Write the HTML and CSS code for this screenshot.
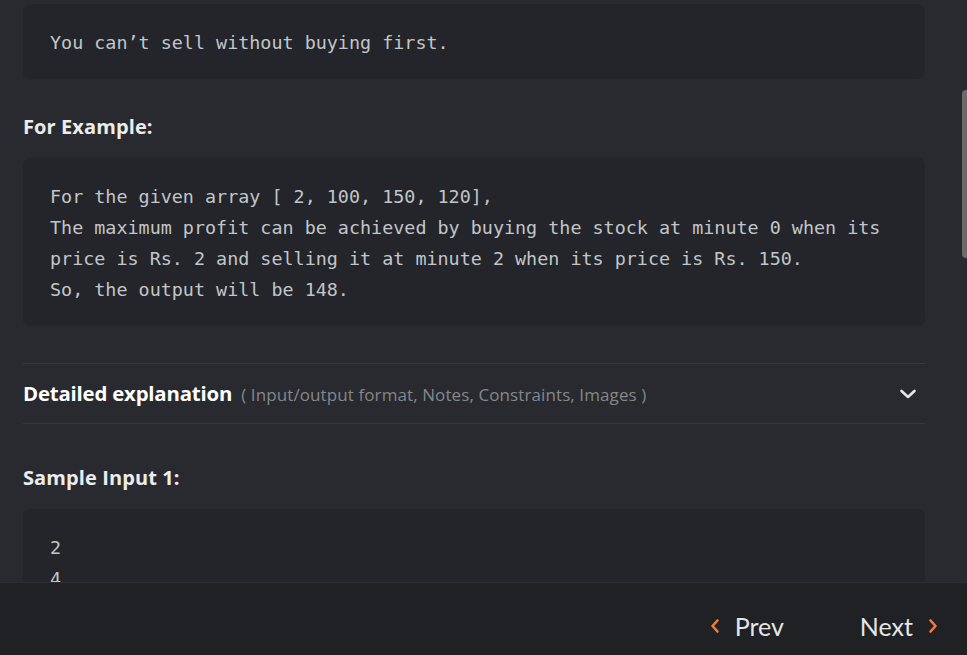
FILE: index.html
```html
<!DOCTYPE html>
<html>
<head>
<meta charset="utf-8">
<link rel="stylesheet" href="styles.css">
</head>
<body>
<div class="page">
  <main class="content">
    <pre class="code first">You can’t sell without buying first.</pre>
    <h3 class="heading">For Example:</h3>
    <pre class="code">For the given array [ 2, 100, 150, 120],
The maximum profit can be achieved by buying the stock at minute 0 when its
price is Rs. 2 and selling it at minute 2 when its price is Rs. 150.
So, the output will be 148.</pre>
    <div class="explain">
      <div class="explain-title">Detailed explanation <span class="explain-sub">( Input/output format, Notes, Constraints, Images )</span></div>
      <svg class="chev" width="18" height="12" viewBox="0 0 18 12"><path d="M2.5 3 L9 9 L15.5 3" fill="none" stroke="#e6e6e6" stroke-width="2.6" stroke-linecap="round" stroke-linejoin="round"/></svg>
    </div>
    <h3 class="heading sample">Sample Input 1:</h3>
    <pre class="code">2
4
7 1 5 3</pre>
    <div class="scroll-thumb"></div>
  </main>
  <footer class="footer">
    <a class="nav prev"><svg width="10" height="16" viewBox="0 0 10 16"><path d="M7.5 2.5 L2.5 8 L7.5 13.5" fill="none" stroke="#f47b36" stroke-width="2.6" stroke-linecap="round" stroke-linejoin="round"/></svg>Prev</a>
    <a class="nav next">Next<svg width="10" height="16" viewBox="0 0 10 16"><path d="M2.5 2.5 L7.5 8 L2.5 13.5" fill="none" stroke="#f47b36" stroke-width="2.6" stroke-linecap="round" stroke-linejoin="round"/></svg></a>
  </footer>
</div>
</body>
</html>
```
FILE: styles.css
```css
html, body {
  margin: 0;
  padding: 0;
  background: #282a2f;
}
.page {
  width: 967px;
  height: 655px;
  display: flex;
  flex-direction: column;
  overflow: hidden;
}
.content {
  position: relative;
  height: 582px;
  flex: none;
  overflow: hidden;
  padding: 4px 42px 0 23px;
  box-sizing: border-box;
  font-family: "Open Sans", Lato, sans-serif;
}
.code {
  margin: 0;
  background: #23252a;
  border-radius: 7px;
  padding: 23px 27px 21px;
  font-family: "DejaVu Sans Mono", "Liberation Mono", monospace;
  font-size: 18.4px;
  line-height: 31px;
  color: #c2c5c9;
  white-space: pre;
}
.heading {
  margin: 36px 0 19px;
  font-size: 20px;
  line-height: 24px;
  font-weight: 700;
  color: #ececec;
  letter-spacing: 0.1px;
}
.explain {
  margin-top: 37px;
  height: 61px;
  box-sizing: border-box;
  border-top: 1px solid #35383d;
  border-bottom: 1px solid #35383d;
  display: flex;
  align-items: center;
  justify-content: space-between;
  padding-right: 8px;
}
.explain-title {
  font-size: 20.4px;
  font-weight: 700;
  color: #ffffff;
  padding-bottom: 1px;
  letter-spacing: -0.2px;
}
.explain-sub {
  font-size: 17px;
  font-weight: 400;
  color: #84878b;
  margin-left: 4px;
  letter-spacing: 0.1px;
}
.chev {
  display: block;
}
.heading.sample {
  margin-top: 42px;
}
.scroll-thumb {
  position: absolute;
  right: 0;
  top: 90px;
  width: 5px;
  height: 168px;
  background: #6a6b6d;
  border-radius: 4px 0 0 4px;
}
.footer {
  flex: 1;
  background: #1f2124;
  border-top: 1px solid #2b2d31;
  display: flex;
  align-items: center;
  justify-content: flex-end;
  gap: 76px;
  padding: 13px 29px 0 0;
  font-family: Lato, "Noto Sans", sans-serif;
}
.nav {
  display: flex;
  align-items: center;
  gap: 15px;
  font-size: 25px;
  color: #e4e6e8;
}
.nav svg {
  display: block;
}
```
